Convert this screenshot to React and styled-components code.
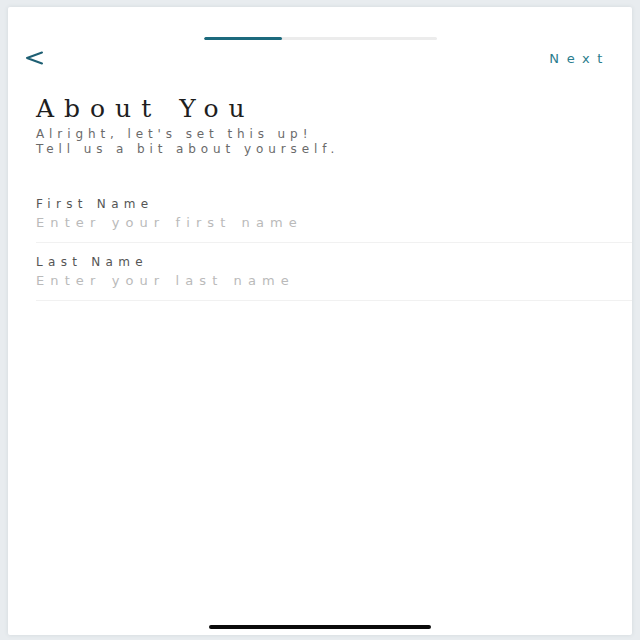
import React from "react"
import styled, { createGlobalStyle } from "styled-components"

const GlobalStyle = createGlobalStyle`
  html, body {
    margin: 0;
    padding: 0;
    background: #e8ecef;
  }
  body {
    font-family: "DejaVu Sans", "Liberation Sans", sans-serif;
  }
`

const Page = styled.div`
  padding: 7px 8px 5px;
`

const Screen = styled.div`
  width: 624px;
  height: 628px;
  background: #ffffff;
  border-radius: 2px;
  box-shadow: 0 0 4px rgba(60, 80, 90, 0.12);
  display: flex;
  flex-direction: column;
`

const Progress = styled.div`
  align-self: center;
  margin-top: 30px;
  width: 233px;
  height: 3px;
  border-radius: 2px;
  background: #ececec;
  overflow: hidden;
`

const ProgressFill = styled.div`
  width: ${({ $value }) => $value}%;
  height: 100%;
  border-radius: 2px;
  background: #1c6a7d;
`

const NavRow = styled.div`
  margin-top: 8px;
  height: 20px;
  padding: 0 22px 0 17px;
  display: flex;
  align-items: center;
  justify-content: space-between;
`

const BackButton = styled.button`
  border: 0;
  background: none;
  padding: 0;
  display: flex;
  cursor: pointer;
`

const NextButton = styled.button`
  border: 0;
  background: none;
  padding: 0;
  font-family: "DejaVu Sans", "Liberation Sans", sans-serif;
  font-size: 13px;
  letter-spacing: 7.6px;
  color: #2a7d8d;
  cursor: pointer;
`

const Content = styled.div`
  padding-left: 28px;
`

const Title = styled.h1`
  margin: 26px 0 0;
  font-family: "DejaVu Serif", "Liberation Serif", serif;
  font-weight: normal;
  font-size: 25px;
  line-height: 30px;
  letter-spacing: 10px;
  color: #1e1e1e;
`

const Intro = styled.p`
  margin: 3px 0 0;
  font-size: 12px;
  line-height: 15px;
  letter-spacing: 4.9px;
  color: #6a6a6a;
`

const Form = styled.div`
  margin-top: 28px;
`

const Field = styled.label`
  display: block;
  padding: 11px 0 10px;
  border-bottom: 1px solid #f1f1f1;
`

const FieldLabel = styled.div`
  font-size: 12px;
  line-height: 16px;
  letter-spacing: 5.3px;
  color: #555555;
`

const FieldInput = styled.input`
  display: block;
  width: 100%;
  margin-top: 2px;
  padding: 0;
  border: 0;
  outline: none;
  background: none;
  font-family: "DejaVu Sans", "Liberation Sans", sans-serif;
  font-size: 13px;
  line-height: 18px;
  height: 18px;
  letter-spacing: 6.1px;
  color: #333;
  &::placeholder {
    color: #bababa;
  }
`

const HomeIndicator = styled.div`
  align-self: center;
  margin-top: auto;
  margin-bottom: 6px;
  width: 222px;
  height: 4px;
  border-radius: 3px;
  background: #0a0a0a;
`

const ChevronLeft = () => (
  <svg width="18" height="14" viewBox="0 0 18 14">
    <polyline
      points="17,1.5 2,7 17,12.5"
      fill="none"
      stroke="#1e5f73"
      strokeWidth="2"
      strokeLinecap="round"
      strokeLinejoin="round"
    />
  </svg>
)

const fields = [
  { label: "First Name", placeholder: "Enter your first name" },
  { label: "Last Name", placeholder: "Enter your last name" },
]

const App = () => {
  return (
    <Page>
      <GlobalStyle />
      <Screen>
        <Progress>
          <ProgressFill $value={33.5} />
        </Progress>
        <NavRow>
          <BackButton aria-label="Back">
            <ChevronLeft />
          </BackButton>
          <NextButton>Next</NextButton>
        </NavRow>
        <Content>
          <Title>About You</Title>
          <Intro>
            Alright, let's set this up!
            <br />
            Tell us a bit about yourself.
          </Intro>
          <Form>
            {fields.map(f => (
              <Field key={f.label}>
                <FieldLabel>{f.label}</FieldLabel>
                <FieldInput placeholder={f.placeholder} />
              </Field>
            ))}
          </Form>
        </Content>
        <HomeIndicator />
      </Screen>
    </Page>
  )
}

export default App
